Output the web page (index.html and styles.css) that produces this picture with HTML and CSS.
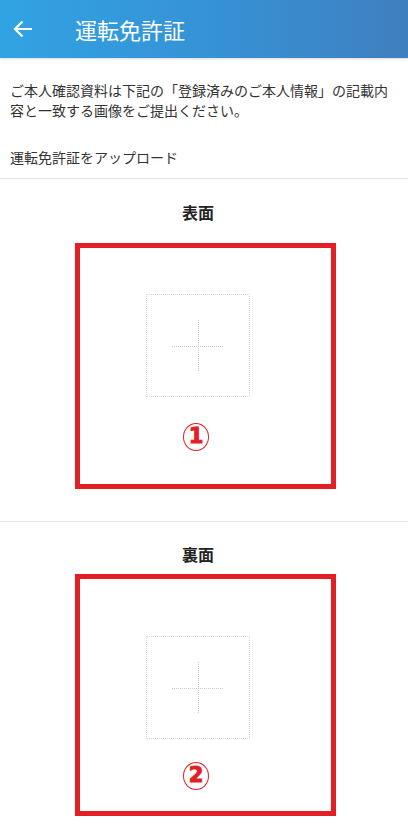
FILE: index.html
```html
<!DOCTYPE html>
<html lang="ja">
<head>
<meta charset="utf-8">
<link rel="stylesheet" href="styles.css">
</head>
<body>
<header class="appbar">
  <svg class="back" width="20" height="18" viewBox="0 0 20 18"><path d="M19 9H2M9.5 1.5L2 9l7.5 7.5" fill="none" stroke="#fff" stroke-width="2.2"/></svg>
  <h1 class="title">運転免許証</h1>
</header>
<div class="intro">
  <p class="lead">ご本人確認資料は下記の「登録済みのご本人情報」の記載内容と一致する画像をご提出ください。</p>
  <p class="sub">運転免許証をアップロード</p>
</div>
<section class="side side-front">
  <h2 class="side-title">表面</h2>
  <div class="upload">
    <svg width="52" height="52" viewBox="0 0 52 52"><path d="M0 26.5H52M26.5 0V52" stroke="#cdcdcd" stroke-width="1" stroke-dasharray="1 1"/></svg>
  </div>
  <span class="num">1</span>
  <div class="mark mark-front"></div>
</section>
<section class="side side-back">
  <h2 class="side-title">裏面</h2>
  <div class="upload">
    <svg width="52" height="52" viewBox="0 0 52 52"><path d="M0 26.5H52M26.5 0V52" stroke="#cdcdcd" stroke-width="1" stroke-dasharray="1 1"/></svg>
  </div>
  <span class="num">2</span>
  <div class="mark mark-back"></div>
</section>
</body>
</html>
```
FILE: styles.css
```css
* { box-sizing: border-box; }
html, body { margin: 0; padding: 0; background: #fff; }
body {
  width: 408px;
  font-family: "Noto Sans CJK JP", "Noto Sans", sans-serif;
  color: #222;
  overflow: hidden;
}
.appbar {
  height: 58px;
  display: flex;
  align-items: center;
  background: linear-gradient(90deg, #30a3e3 0%, #3691d4 55%, #3f7fbf 100%);
  box-shadow: 0 1px 2px rgba(0,0,0,0.15);
}
.back { margin-left: 13px; flex: none; }
.title {
  margin: 0 0 0 42px;
  font-size: 22px;
  font-weight: 400;
  color: #fff;
  line-height: 30px;
}
.intro {
  padding: 22px 18px 0 10px;
  border-bottom: 1px solid #e6e6e6;
}
.lead {
  margin: 0;
  font-size: 14px;
  line-height: 20px;
  color: #333;
}
.sub {
  margin: 27px 0 0;
  padding-bottom: 11px;
  font-size: 14px;
  line-height: 20px;
  color: #333;
}
.side {
  position: relative;
  display: flex;
  flex-direction: column;
  align-items: center;
  padding-right: 12px;
}
.side-front { padding-top: 21px; padding-bottom: 70px; border-bottom: 1px solid #e6e6e6; }
.side-back { padding-top: 20px; padding-bottom: 40px; }
.side-title {
  margin: 0;
  font-size: 16px;
  font-weight: 700;
  line-height: 24px;
  color: #222;
}
.upload {
  margin-top: 70px;
  width: 104px;
  height: 103px;
  border: 1px dotted #d8d8d8;
  display: flex;
  align-items: center;
  justify-content: center;
}
.num {
  margin-top: 26px;
  margin-left: -4px;
  width: 26px;
  height: 28px;
  border: 1.5px solid #e31e24;
  border-radius: 50%;
  color: #e31e24;
  font-family: "DejaVu Sans", "Liberation Sans", sans-serif;
  font-weight: 700;
  font-size: 21px;
  line-height: 25px;
  text-align: center;
  -webkit-text-stroke: 1px #e31e24;
}
.side-back .num { margin-top: 23px; }
.mark {
  position: absolute;
  left: 75px;
  width: 261px;
  border: 5px solid #e31e24;
}
.mark-front { top: 64px; height: 246px; }
.mark-back { top: 52px; height: 242px; }
```
